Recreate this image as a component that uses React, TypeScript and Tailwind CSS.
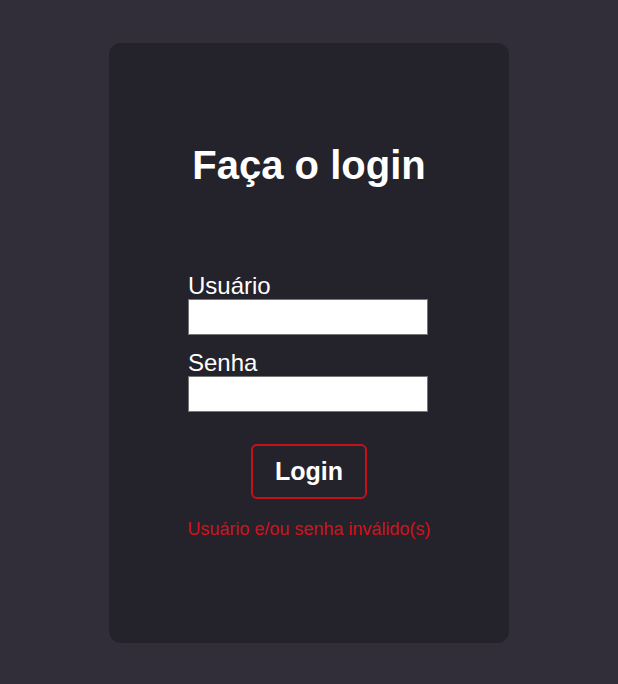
export default function App() {
  return (
    <div className="min-h-screen w-full bg-[#312d39] flex items-center justify-center font-['Liberation_Sans',Arial,sans-serif]">
      <div className="mt-[2px] w-[400px] h-[600px] rounded-xl bg-[#24222b] flex flex-col items-center pt-[100px]">
        <h1 className="text-[40px] leading-[45px] font-bold text-white">Faça o login</h1>

        <form className="mt-[84px] mr-[2px] w-[240px] flex flex-col" onSubmit={(e) => e.preventDefault()}>
          <label htmlFor="usuario" className="block text-[24px] leading-[27px] text-white">
            Usuário
          </label>
          <input
            id="usuario"
            type="text"
            className="h-[36px] w-full bg-white border border-[#767676] outline-none px-2 text-black"
          />

          <label htmlFor="senha" className="block mt-[14px] text-[24px] leading-[27px] text-white">
            Senha
          </label>
          <input
            id="senha"
            type="password"
            className="h-[36px] w-full bg-white border border-[#767676] outline-none px-2 text-black"
          />

          <button
            type="submit"
            className="self-center ml-[2px] mt-[32px] w-[116px] h-[55px] rounded-md border-2 border-[#c8101a] bg-transparent text-white text-[25px] leading-[27px] font-bold"
          >
            Login
          </button>
        </form>

        <p className="mt-[20px] text-[18px] leading-[20px] text-[#d0141c]">Usuário e/ou senha inválido(s)</p>
      </div>
    </div>
  );
}
